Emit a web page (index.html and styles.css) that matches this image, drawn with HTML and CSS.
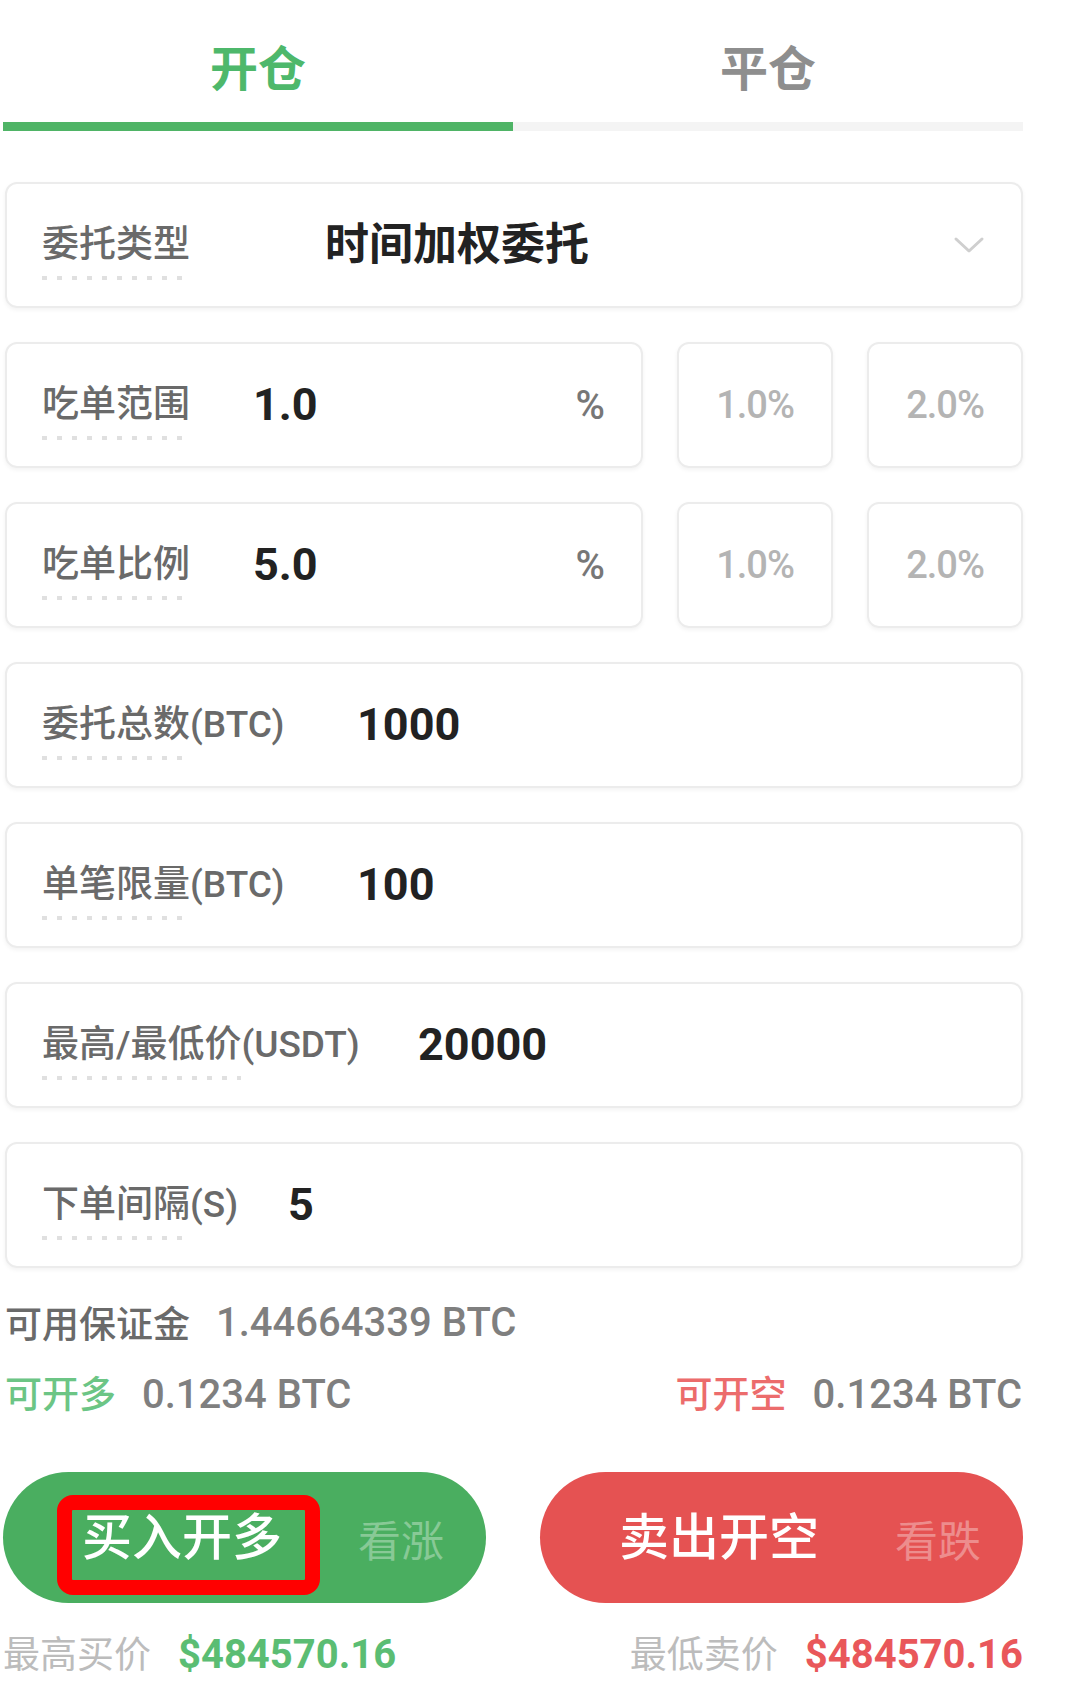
FILE: index.html
```html
<!DOCTYPE html>
<html lang="zh-CN">
<head>
<meta charset="utf-8">
<title>开仓</title>
<link rel="stylesheet" href="styles.css">
</head>
<body>
<div class="page">
  <div class="tabs">
    <div class="tab tab-active">开仓</div>
    <div class="tab">平仓</div>
  </div>

  <div class="form">
    <div class="field">
      <span class="label label-type"><span class="dot">委托类型</span></span>
      <span class="value">时间加权委托</span>
      <svg class="chevron" width="32" height="20" viewBox="0 0 32 20"><polyline points="3,4 16,16 29,4" fill="none" stroke="#cfcfcf" stroke-width="3" stroke-linecap="round" stroke-linejoin="round"/></svg>
    </div>

    <div class="row">
      <div class="field field-main">
        <span class="label label-short"><span class="dot">吃单范围</span></span>
        <span class="value num">1.0</span>
        <span class="unit">%</span>
      </div>
      <div class="quick">1.0%</div>
      <div class="quick">2.0%</div>
    </div>

    <div class="row">
      <div class="field field-main">
        <span class="label label-short"><span class="dot">吃单比例</span></span>
        <span class="value num">5.0</span>
        <span class="unit">%</span>
      </div>
      <div class="quick">1.0%</div>
      <div class="quick">2.0%</div>
    </div>

    <div class="field">
      <span class="label label-btc"><span class="dot">委托总数</span>(BTC)</span>
      <span class="value num">1000</span>
    </div>

    <div class="field">
      <span class="label label-btc"><span class="dot">单笔限量</span>(BTC)</span>
      <span class="value num">100</span>
    </div>

    <div class="field">
      <span class="label label-usdt"><span class="dot">最高/最低价</span>(USDT)</span>
      <span class="value num">20000</span>
    </div>

    <div class="field">
      <span class="label label-sec"><span class="dot">下单间隔</span>(S)</span>
      <span class="value num">5</span>
    </div>
  </div>

  <div class="info">
    <div class="info-line">
      <span class="info-label">可用保证金</span>
      <span class="info-value">1.44664339 BTC</span>
    </div>
    <div class="info-line info-split">
      <div><span class="info-label green">可开多</span><span class="info-value">0.1234 BTC</span></div>
      <div><span class="info-label red">可开空</span><span class="info-value">0.1234 BTC</span></div>
    </div>
  </div>

  <div class="actions">
    <div class="btn btn-buy">
      <span class="btn-main">买入开多</span>
      <span class="btn-sub">看涨</span>
      <span class="highlight"></span>
    </div>
    <div class="btn btn-sell">
      <span class="btn-main">卖出开空</span>
      <span class="btn-sub">看跌</span>
    </div>
  </div>

  <div class="prices">
    <div><span class="price-label">最高买价</span><span class="price green">$484570.16</span></div>
    <div><span class="price-label">最低卖价</span><span class="price red">$484570.16</span></div>
  </div>
</div>
</body>
</html>
```

FILE: styles.css
```css
* { box-sizing: border-box; }

body {
  margin: 0;
  background: #ffffff;
  font-family: "Roboto", "Noto Sans CJK SC", sans-serif;
  color: #222;
}

.page {
  width: 1023px;
  padding-left: 3px;
}

/* Tabs */
.tabs {
  display: grid;
  grid-template-columns: 1fr 1fr;
}

.tab {
  height: 131px;
  padding-top: 44px;
  font-size: 48px;
  line-height: 52px;
  font-weight: 700;
  text-align: center;
  color: #8e8e8e;
  border-bottom: 9px solid #f4f4f4;
}

.tab-active {
  color: #4eb86b;
  border-bottom-color: #4fb466;
}

/* Form */
.form {
  margin-top: 51px;
  margin-left: 2px;
  display: flex;
  flex-direction: column;
  gap: 34px;
}

.row {
  display: flex;
  gap: 34px;
}

.field {
  height: 126px;
  border: 2px solid #ececec;
  border-radius: 12px;
  box-shadow: 0 2px 4px rgba(0, 0, 0, 0.05);
  display: flex;
  align-items: center;
  padding: 0 36px 0 35px;
}

.field-main {
  flex: 1;
}

.quick {
  width: 156px;
  height: 126px;
  border: 2px solid #ececec;
  border-radius: 12px;
  box-shadow: 0 2px 4px rgba(0, 0, 0, 0.05);
  display: flex;
  align-items: center;
  justify-content: center;
  font-size: 38px;
  font-weight: 500;
  color: #b4b4b4;
  letter-spacing: -1px;
}

.label {
  flex: none;
  font-size: 37px;
  font-weight: 500;
  line-height: 50px;
  color: #6a6a6a;
}

.dot {
  display: inline-block;
  padding-bottom: 10px;
  margin-bottom: -10px;
  background-image: linear-gradient(to right, #e0e0e0 0, #e0e0e0 5px, transparent 5px);
  background-size: 15px 4px;
  background-repeat: repeat-x;
  background-position: left bottom;
}

.label-type { width: 283px; }
.label-short { width: 211px; }
.label-btc { width: 315px; }
.label-usdt { width: 376px; }
.label-sec { width: 246px; }

.value {
  font-size: 44px;
  font-weight: 700;
  color: #222;
  line-height: 50px;
}

.num {
  font-size: 45px;
}

.unit {
  margin-left: auto;
  font-size: 40px;
  font-weight: 500;
  color: #777;
}

.chevron {
  margin-left: auto;
  margin-right: 0;
}

/* Info */
.info {
  margin-top: 29px;
  margin-left: 2px;
  display: flex;
  flex-direction: column;
  gap: 20px;
}

.info-line {
  height: 50px;
  display: flex;
  align-items: center;
}

.info-split {
  justify-content: space-between;
  padding-right: 1px;
}

.info-label {
  font-size: 37px;
  font-weight: 500;
  color: #6a6a6a;
  margin-right: 26px;
}

.info-value {
  font-size: 40px;
  font-weight: 500;
  color: #7f7f7f;
}

.info-label.green { color: #6cc585; }
.info-label.red { color: #ec6c6c; }

/* Buttons */
.actions {
  margin-top: 55px;
  display: flex;
  gap: 54px;
}

.btn {
  position: relative;
  flex: 1;
  height: 131px;
  border-radius: 66px;
  display: flex;
  align-items: center;
  padding-left: 79px;
}

.btn-buy { background: #4aae60; }
.btn-sell { background: #e55252; }

.btn-main {
  font-size: 50px;
  font-weight: 500;
  color: #ffffff;
  line-height: 60px;
}

.btn-sub {
  margin-left: 76px;
  font-size: 43px;
  color: rgba(255, 255, 255, 0.35);
}

.highlight {
  position: absolute;
  left: 54px;
  top: 23px;
  width: 263px;
  height: 100px;
  border: 15px solid #ff0000;
  border-radius: 16px;
}

/* Prices */
.prices {
  margin-top: 24px;
  height: 50px;
  display: flex;
  justify-content: space-between;
  align-items: center;
}

.price-label {
  font-size: 37px;
  color: #bcbcbc;
  margin-right: 27px;
}

.price {
  font-size: 40px;
  font-weight: 700;
}

.price.green { color: #5bbd73; }
.price.red { color: #e9575a; }
```
